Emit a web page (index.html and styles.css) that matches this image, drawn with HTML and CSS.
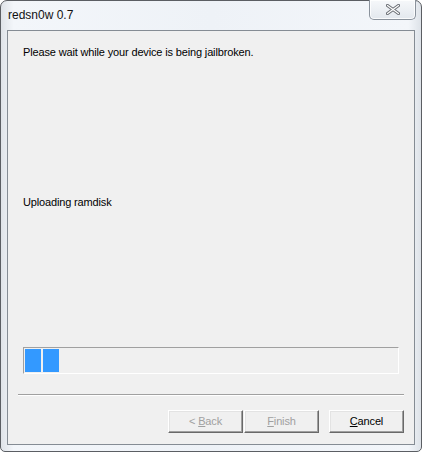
FILE: index.html
```html
<!DOCTYPE html>
<html lang="en">
<head>
  <meta charset="UTF-8" />
  <title>redsn0w 0.7</title>
  <link rel="stylesheet" href="styles.css">
</head>
<body>

  <div class="window" role="dialog" aria-label="redsn0w 0.7">
    <div class="titlebar">
      <span class="title">redsn0w 0.7</span>
      <button class="close" aria-label="Close">
        <svg width="14" height="11" viewBox="0 0 14 11">
          <path d="M1.5 1.5 L12.5 9.5 M12.5 1.5 L1.5 9.5" stroke="#6b6f75" stroke-width="3.2" stroke-linecap="round" />
          <path d="M1.5 1.5 L12.5 9.5 M12.5 1.5 L1.5 9.5" stroke="#fff" stroke-width="1.2" stroke-linecap="round" />
        </svg>
      </button>
    </div>

    <div class="client">
      <p class="msg">Please wait while your device is being jailbroken.</p>
      <p class="status">Uploading ramdisk</p>

      <div class="progress">
        <span class="chunk"></span>
        <span class="chunk"></span>
      </div>

      <hr class="sep">

      <div class="buttons">
        <button class="btn" disabled>&lt; <u>B</u>ack</button>
        <button class="btn" disabled><u>F</u>inish</button>
        <button class="btn cancel"><u>C</u>ancel</button>
      </div>
    </div>
  </div>

</body>
</html>
```

FILE: styles.css
```css
* {
  box-sizing: border-box;
  margin: 0;
  padding: 0;
}

body {
  width: 422px;
  height: 452px;
  background: #fff;
  font-family: "Liberation Sans", Arial, sans-serif;
  font-size: 11px;
  letter-spacing: -0.15px;
  color: #000;
  overflow: hidden;
}

/* Ventana */
.window {
  width: 422px;
  height: 452px;
  border: 1px solid #5b5e63;
  border-radius: 7px 7px 5px 5px;
  background: linear-gradient(90deg, #dfe3e8 0%, #f3f6fa 3%, #eef2f7 50%, #f3f6fa 97%, #dde2e8 100%);
  display: flex;
  flex-direction: column;
  padding: 0 6px 6px;
}

.titlebar {
  position: relative;
  height: 29px;
  display: flex;
  align-items: center;
}

.title {
  font-size: 12px;
  letter-spacing: 0;
  padding-left: 1px;
  padding-bottom: 1px;
  color: #111;
}

.close {
  position: absolute;
  top: -1px;
  right: -1px;
  width: 47px;
  height: 20px;
  border: 1px solid #8a929c;
  border-top: none;
  border-radius: 0 0 5px 5px;
  background: linear-gradient(#f6f8fa, #e3e8ee);
  box-shadow: inset 0 0 0 1px rgba(255, 255, 255, 0.8);
  display: flex;
  align-items: center;
  justify-content: center;
}

/* Área cliente */
.client {
  flex: 1;
  border: 1px solid #858c94;
  background: #f0f0f0;
  display: flex;
  flex-direction: column;
  padding: 15px 15px 0;
}

.msg {
  line-height: 13px;
}

.status {
  line-height: 13px;
  margin-top: 137px;
}

.progress {
  margin-top: 138px;
  height: 27px;
  width: 376px;
  border-top: 1px solid #a0a0a0;
  border-left: 1px solid #a0a0a0;
  border-right: 1px solid #fff;
  border-bottom: 1px solid #fff;
  padding: 1px;
  display: flex;
  gap: 2px;
}

.chunk {
  width: 16px;
  height: 23px;
  background: #3399ff;
}

.sep {
  margin: 20px -5px 0;
  border: none;
  border-top: 1px solid #a0a0a0;
  border-bottom: 1px solid #fff;
}

.buttons {
  margin-top: 14px;
  margin-right: -5px;
  display: flex;
  justify-content: flex-end;
}

.btn {
  width: 75px;
  height: 23px;
  font-family: "Liberation Sans", Arial, sans-serif;
  font-size: 11px;
  letter-spacing: -0.15px;
  background: #f0f0f0;
  color: #000;
  border: 1px solid;
  border-color: #fff #696969 #696969 #fff;
  box-shadow: inset -1px -1px 0 #a0a0a0, inset 1px 1px 0 #e3e3e3;
  padding-bottom: 1px;
}

.btn u {
  text-decoration-thickness: 1px;
  text-underline-offset: 1px;
}

.btn:disabled {
  color: #a0a0a0;
}

.btn + .btn {
  margin-left: 1px;
}

.btn.cancel {
  margin-left: 10px;
}
```
